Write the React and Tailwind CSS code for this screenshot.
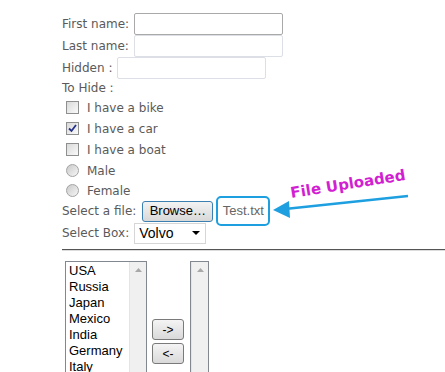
import React from 'react'

const Checkbox = ({ checked }) => (
  <span className="w-[13px] h-[13px] border border-[#8e8f8f] bg-gradient-to-br from-[#d9d9d9] to-[#fafafa] flex items-center justify-center shrink-0">
    {checked && (
      <svg width="9" height="9" viewBox="0 0 9 9">
        <path d="M1 4.5 L3.5 7 L8 1" fill="none" stroke="#26318b" strokeWidth="1.8" />
      </svg>
    )}
  </span>
)

const Radio = () => (
  <span className="w-[13px] h-[13px] rounded-full border border-[#a3a3a3] bg-gradient-to-br from-[#c9c9c9] to-[#f7f7f7] shrink-0" />
)

const TextInput = ({ dark }) => (
  <span
    className={`ml-[5px] w-[149px] h-[22px] bg-white border rounded-[2px] ${
      dark ? 'border-[#a9a9a9]' : 'border-[#dcdfe6]'
    }`}
  />
)

const Scrollbar = () => (
  <div className="w-[17px] h-full bg-[#f0f0f0] border-l border-[#e4e4e4] flex justify-center pt-[6px]">
    <svg width="7" height="4" viewBox="0 0 7 4">
      <path d="M0 4 L3.5 0 L7 4 Z" fill="#a8a8a8" />
    </svg>
  </div>
)

const SmallButton = ({ label }) => (
  <div className="w-[32px] h-[21px] rounded-[3px] border border-[#7a7a7a] bg-gradient-to-b from-[#f4f4f4] to-[#d9d9d9] flex items-center justify-center text-[12px] text-black font-['Liberation_Sans',Arial,sans-serif]">
    {label}
  </div>
)

export default function App() {
  const countries = ['USA', 'Russia', 'Japan', 'Mexico', 'India', 'Germany', 'Italy']

  return (
    <div className="relative w-[445px] h-[372px] overflow-hidden bg-white text-[12px] text-[#5a5a5a] font-['DejaVu_Sans',sans-serif]">
      <div className="pl-[62px] pt-[13px]">
        <div className="flex items-center h-[22px]">
          <span>First name:</span>
          <TextInput dark />
        </div>
        <div className="flex items-center h-[22px]">
          <span>Last name:</span>
          <TextInput />
        </div>
        <div className="flex items-center h-[22px]">
          <span>Hidden :</span>
          <TextInput />
        </div>
        <div className="flex items-center h-[18px]">
          <span>To Hide :</span>
        </div>

        {/* checkboxes and radios */}
        <div className="flex items-center h-[21px] pl-[4px] gap-[8px]">
          <Checkbox />
          <span>I have a bike</span>
        </div>
        <div className="flex items-center h-[21px] pl-[4px] gap-[8px]">
          <Checkbox checked />
          <span>I have a car</span>
        </div>
        <div className="flex items-center h-[21px] pl-[4px] gap-[8px]">
          <Checkbox />
          <span>I have a boat</span>
        </div>
        <div className="flex items-center h-[21px] pl-[4px] gap-[8px]">
          <Radio />
          <span>Male</span>
        </div>
        <div className="flex items-center h-[19px] pl-[4px] gap-[8px]">
          <Radio />
          <span>Female</span>
        </div>

        <div className="flex items-center h-[22px]">
          <span>Select a file:</span>
          <span className="ml-[6px] w-[71px] h-[21px] rounded-[3px] border border-[#3c7fb1] bg-gradient-to-b from-[#f3f3f3] to-[#d8d8d8] flex items-center justify-center text-[13px] text-black font-['Liberation_Sans',Arial,sans-serif]">
            Browse…
          </span>
          <span className="ml-[3px] -my-[4px] w-[54px] h-[30px] rounded-[5px] border-2 border-[#1ea0e0] flex items-center justify-center text-[13px] text-[#666] font-['Liberation_Sans',Arial,sans-serif]">
            Test.txt
          </span>
        </div>
        <div className="flex items-center h-[22px]">
          <span>Select Box:</span>
          <span className="ml-[5px] w-[72px] h-[21px] border border-[#d6d6d6] bg-white flex items-center justify-between pl-[4px] pr-[5px] text-[14px] text-black font-['Liberation_Sans',Arial,sans-serif]">
            Volvo
            <svg width="8" height="4" viewBox="0 0 8 4">
              <path d="M0 0 L8 0 L4 4 Z" fill="#000" />
            </svg>
          </span>
        </div>

        <div className="mt-[5px] h-[2px] border-t border-[#555] border-b border-b-[#dcdcdc]" />

        {/* list boxes */}
        <div className="flex items-start mt-[10px] pl-[3px]">
          <div className="w-[82px] h-[120px] border border-[#828790] bg-white flex">
            <div className="flex-1 pl-[3px] pt-[1px] text-[13px] leading-[16px] text-black font-['Liberation_Sans',Arial,sans-serif]">
              {countries.map((c) => (
                <div key={c}>{c}</div>
              ))}
            </div>
            <Scrollbar />
          </div>
          <div className="ml-[5px] mt-[58px] flex flex-col gap-[3px]">
            <SmallButton label="->" />
            <SmallButton label="<-" />
          </div>
          <div className="ml-[6px] w-[19px] h-[120px] border border-[#828790] bg-white flex">
            <Scrollbar />
          </div>
        </div>
      </div>

      {/* annotation */}
      <svg className="absolute left-0 top-0" width="445" height="372" viewBox="0 0 445 372">
        <line x1="408" y1="196" x2="285" y2="209" stroke="#1ea0e0" strokeWidth="2.5" />
        <path d="M273 210 L289 201 L290 218 Z" fill="#1ea0e0" />
      </svg>
      <div className="absolute left-[292px] top-[184px] origin-bottom-left -rotate-[9deg] text-[15px] leading-[18px] font-bold text-[#d21fd2] font-['DejaVu_Sans',sans-serif] whitespace-nowrap">
        File Uploaded
      </div>
    </div>
  )
}
